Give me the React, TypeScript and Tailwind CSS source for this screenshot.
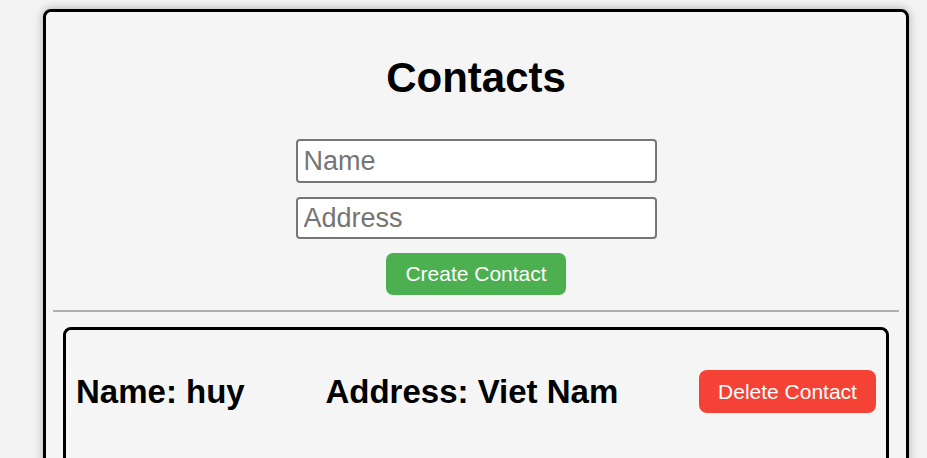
import { useState } from 'react'

type Contact = { id: number; name: string; address: string }

export default function App() {
  const [name, setName] = useState('')
  const [address, setAddress] = useState('')
  const [contacts, setContacts] = useState<Contact[]>([
    { id: 1, name: 'huy', address: 'Viet Nam' },
  ])

  const createContact = () => {
    if (!name.trim()) return
    setContacts([...contacts, { id: Date.now(), name, address }])
    setName('')
    setAddress('')
  }

  const deleteContact = (id: number) => {
    setContacts(contacts.filter((c) => c.id !== id))
  }

  return (
    <div className="min-h-screen bg-[#f3f3f3] pt-[9px] pl-[43px] font-['Liberation_Sans',Arial,sans-serif] text-black">
      <div className="w-[866px] rounded-[8px] border-[3px] border-black bg-[#f5f5f5] px-[7px] pb-[40px] shadow-[0_0_10px_rgba(0,0,0,0.3)]">
        <h1 className="pt-[45px] text-center text-[42px] font-bold leading-none">Contacts</h1>

        <div className="mt-[40px] flex flex-col items-center">
          <input
            value={name}
            onChange={(e) => setName(e.target.value)}
            placeholder="Name"
            className="h-[44px] w-[361px] rounded-[4px] border-2 border-[#767676] bg-white px-[6px] text-[27px] placeholder:text-[#757575] outline-none"
          />
          <input
            value={address}
            onChange={(e) => setAddress(e.target.value)}
            placeholder="Address"
            className="mt-[14px] h-[42px] w-[361px] rounded-[4px] border-2 border-[#767676] bg-white px-[6px] text-[27px] placeholder:text-[#757575] outline-none"
          />
          <button
            onClick={createContact}
            className="mt-[14px] h-[42px] w-[180px] rounded-[7px] bg-[#4caf50] text-[21px] text-white"
          >
            Create Contact
          </button>
        </div>

        <div className="mt-[15px] h-[2px] bg-[#b0b0b0]" />

        <div className="mx-[10px] mt-[15px] flex flex-col gap-4">
          {contacts.map((c) => (
            <div
              key={c.id}
              className="flex items-center justify-between rounded-[8px] border-[3px] border-black px-[10px] pt-[37px] pb-[60px]"
            >
              <h3 className="text-[33px] font-bold">Name: {c.name}</h3>
              <h3 className="text-[33px] font-bold">Address: {c.address}</h3>
              <button
                onClick={() => deleteContact(c.id)}
                className="h-[43px] w-[177px] rounded-[8px] bg-[#f44336] text-[21px] text-white"
              >
                Delete Contact
              </button>
            </div>
          ))}
        </div>
      </div>
    </div>
  )
}
